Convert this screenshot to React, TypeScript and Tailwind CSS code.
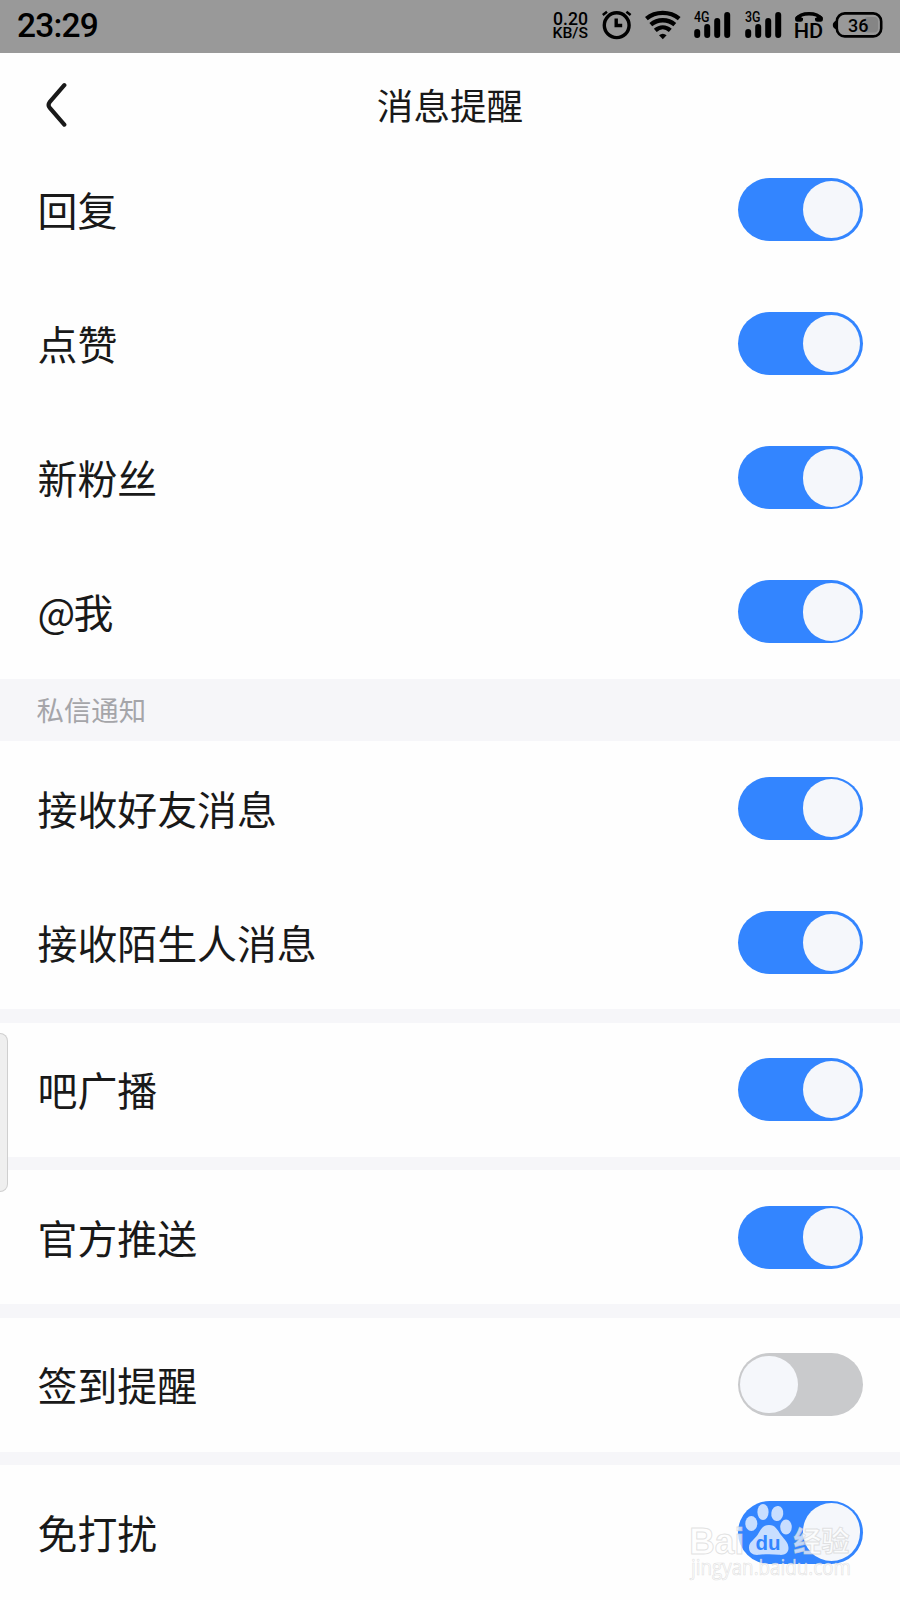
import { useState } from "react";
import clsx from "clsx";

interface SettingItem {
  id: string;
  label: string;
  enabled: boolean;
}

interface SettingGroup {
  id: string;
  title?: string;
  items: SettingItem[];
}

const groups: SettingGroup[] = [
  {
    id: "interaction",
    items: [
      { id: "reply", label: "回复", enabled: true },
      { id: "like", label: "点赞", enabled: true },
      { id: "fans", label: "新粉丝", enabled: true },
      { id: "mention", label: "@我", enabled: true },
    ],
  },
  {
    id: "private",
    title: "私信通知",
    items: [
      { id: "friend", label: "接收好友消息", enabled: true },
      { id: "stranger", label: "接收陌生人消息", enabled: true },
    ],
  },
  { id: "broadcast", items: [{ id: "broadcast", label: "吧广播", enabled: true }] },
  { id: "official", items: [{ id: "official", label: "官方推送", enabled: true }] },
  { id: "sign", items: [{ id: "sign", label: "签到提醒", enabled: false }] },
  { id: "dnd", items: [{ id: "dnd", label: "免打扰", enabled: true }] },
];

function SignalIcon({ label }: { label: string }) {
  return (
    <svg width="38" height="30" viewBox="0 0 38 30" className="shrink-0 overflow-visible">
      <text x="0" y="12" fontSize="14" fontWeight="500" textLength="15.5" lengthAdjust="spacingAndGlyphs" className="font-['Roboto',sans-serif]">
        {label}
      </text>
      <g stroke="black" strokeWidth="6" strokeLinecap="round">
        <path d="M3.2 22V25" />
        <path d="M13.2 17V25" />
        <path d="M23.2 11V25" />
        <path d="M33.2 5V25" />
      </g>
    </svg>
  );
}

function StatusBar() {
  return (
    <header className="flex h-[53px] shrink-0 items-start bg-[#999999] pl-[17px] font-['Roboto',sans-serif] text-black">
      <span className="mt-[6px] w-[535px] text-[33.5px] leading-10 font-medium tracking-[-0.8px]">23:29</span>

      <svg width="38" height="34" viewBox="0 0 38 34" className="mt-[10px] shrink-0 overflow-visible font-medium">
        <text x="1" y="15" fontSize="17.8" textLength="35" lengthAdjust="spacingAndGlyphs">0.20</text>
        <text x="0.5" y="28.2" fontSize="14.5" textLength="35.5" lengthAdjust="spacingAndGlyphs">KB/S</text>
      </svg>

      {/* Alarm */}
      <svg width="30" height="30" viewBox="0 0 30 30" fill="none" stroke="black" className="mt-[10px] ml-[12px] shrink-0">
        <circle cx="14.7" cy="15.2" r="12.4" strokeWidth="3.4" />
        <path d="M14.2 8.5V15.5H20.2" strokeWidth="3.4" />
        <path d="M0.8 5L5 1.8M28.6 5L24.4 1.8" strokeWidth="2.6" />
      </svg>

      {/* Wifi */}
      <svg width="36" height="30" viewBox="0 0 36 30" fill="none" stroke="black" strokeWidth="4.3" className="mt-[10px] ml-[13px] shrink-0">
        <path d="M1.4 8.6C10.5 1 25 1 34.2 8.6" />
        <path d="M5.8 14.6C12.5 8.8 23.1 8.8 29.8 14.6" />
        <path d="M10.3 20.4C14.8 16.4 20.8 16.4 25.3 20.4" />
        <path d="M14 25.2Q17.8 22.2 21.6 25.2L17.8 29.2Z" fill="black" stroke="none" />
      </svg>

      <div className="mt-[10px] ml-[13px] flex gap-[13px]">
        <SignalIcon label="4G" />
        <SignalIcon label="3G" />
      </div>

      {/* HD call */}
      <svg width="30" height="34" viewBox="0 0 30 34" className="mt-[10px] ml-[11px] shrink-0 overflow-visible">
        <path d="M2.8 8.6C7 2.2 23 2.2 27.2 8.6" fill="none" stroke="black" strokeWidth="3.4" />
        <path d="M1 9Q1 6 4 5.5L9 8.3V9.8Q9 11.8 6.6 11.8H3Q1 11.6 1 9Z" />
        <path d="M29 9Q29 6 26 5.5L21 8.3V9.8Q21 11.8 23.4 11.8H27Q29 11.6 29 9Z" />
        <text x="-0.3" y="28" fontSize="20" fontWeight="500" textLength="29.5" lengthAdjust="spacingAndGlyphs">HD</text>
      </svg>

      {/* Battery */}
      <svg width="52" height="30" viewBox="0 0 52 30" className="mt-[10px] ml-[8px] shrink-0">
        <rect x="32" y="7" width="14" height="15.5" rx="4" fill="#858585" />
        <path d="M4.5 10.5Q0.8 12 0.8 15T4.5 19.5Z" />
        <rect x="4.8" y="3.4" width="44.4" height="23" rx="8" fill="none" stroke="black" strokeWidth="2.6" />
        <text x="16" y="21.8" fontSize="19" fontWeight="500" textLength="20.5" lengthAdjust="spacingAndGlyphs">36</text>
      </svg>
    </header>
  );
}

function TitleBar() {
  return (
    <div className="grid h-[89.5px] shrink-0 grid-cols-[1fr_auto_1fr] items-start">
      <button aria-label="返回" className="mt-[29px] ml-[45px] w-6">
        <svg width="24" height="46" viewBox="0 0 24 46" fill="none" stroke="#191919" strokeWidth="4.2" strokeLinecap="round" strokeLinejoin="round">
          <path d="M19.3 3.2L4.6 20.2Q2.6 22.9 4.6 25.6L19.3 42.6" />
        </svg>
      </button>
      <h1 className="mt-[25px] text-[36.6px] leading-[54px]">消息提醒</h1>
    </div>
  );
}

function Toggle({ checked, onChange }: { checked: boolean; onChange: () => void }) {
  return (
    <button
      role="switch"
      aria-checked={checked}
      onClick={onChange}
      className={clsx(
        "flex h-[63px] w-[125px] items-center rounded-full px-[2.5px]",
        checked ? "justify-end bg-[#3385ff]" : "justify-start bg-[#c9cacc]"
      )}
    >
      <span className="size-[57.5px] rounded-full bg-[#f5f7fb]" />
    </button>
  );
}

function Watermark() {
  return (
    <svg width="180" height="90" viewBox="0 0 180 90" className="pointer-events-none absolute right-[40px] bottom-[20px] overflow-visible">
      <g fill="white" fillOpacity="0.7" stroke="#cfcfcf" strokeOpacity="0.6" strokeWidth="1">
        <text x="9.3" y="64.4" fontSize="37" fontWeight="700" textLength="55" lengthAdjust="spacingAndGlyphs" className="font-['Liberation_Sans',sans-serif]">Bai</text>
        <text x="113.5" y="62" fontSize="28" fontWeight="700" textLength="56" lengthAdjust="spacingAndGlyphs">经验</text>
        <text x="11" y="85" fontSize="21" textLength="160" lengthAdjust="spacingAndGlyphs" strokeWidth="0.7" className="font-['Open_Sans',sans-serif]">jingyan.baidu.com</text>
      </g>
      <g fill="#c8deff">
        <ellipse cx="71.3" cy="33.5" rx="6" ry="7.6" />
        <ellipse cx="83" cy="22" rx="5.6" ry="8" />
        <ellipse cx="97.3" cy="23.5" rx="6" ry="7.6" transform="rotate(8 97.3 23.5)" />
        <ellipse cx="106" cy="37" rx="5.8" ry="7.4" />
        <path d="M89 35C95.5 35 97.5 40 101 45C105 50 108.5 53 108.5 58C108.5 63.5 104 65.5 99 64.8C93 64 85 64 79 64.8C73 65.5 69 63 69 57.5C69 52 74.5 49.5 77.5 45C81 39 83 35 89 35Z" />
      </g>
      <text x="75.5" y="60" fontSize="20" fontWeight="700" textLength="25" lengthAdjust="spacingAndGlyphs" fill="#3385ff" className="font-['Liberation_Sans',sans-serif]">du</text>
    </svg>
  );
}

export default function App() {
  const [values, setValues] = useState<Record<string, boolean>>(() =>
    Object.fromEntries(groups.flatMap((g) => g.items).map((item) => [item.id, item.enabled]))
  );

  const toggle = (id: string) => setValues((prev) => ({ ...prev, [id]: !prev[id] }));

  return (
    <div className="relative flex h-[1600px] w-[900px] flex-col overflow-hidden bg-[#fefefe] font-['Noto_Sans_CJK_SC',sans-serif] text-[#191919]">
      <StatusBar />
      <TitleBar />

      <main>
        {groups.map((group, index) => (
          <section key={group.id}>
            {group.title ? (
              <h2 className="flex h-[62px] items-center bg-[#f6f6f9] pb-[2px] pl-[36.5px] text-[27.4px] leading-10 text-[#a5a5a9]">
                {group.title}
              </h2>
            ) : (
              index > 0 && <div className="h-[13.3px] bg-[#f6f6f9]" />
            )}
            {group.items.map((item) => (
              <div key={item.id} className="flex h-[134.15px] items-center justify-between pr-[37.5px] pl-[37.5px]">
                <span
                  className={clsx(
                    "pb-px text-[39.9px] leading-[58px]",
                    item.label.startsWith("@") && "tracking-[-1.8px]"
                  )}
                >
                  {item.label}
                </span>
                <Toggle checked={values[item.id]} onChange={() => toggle(item.id)} />
              </div>
            ))}
          </section>
        ))}
      </main>

      {/* Edge panel handle */}
      <div className="absolute top-[1033px] left-0 h-[159px] w-2 rounded-r-[8px] border border-l-0 border-[#cfcfcf] bg-[#eeeeee]/95" />

      <Watermark />
    </div>
  );
}
